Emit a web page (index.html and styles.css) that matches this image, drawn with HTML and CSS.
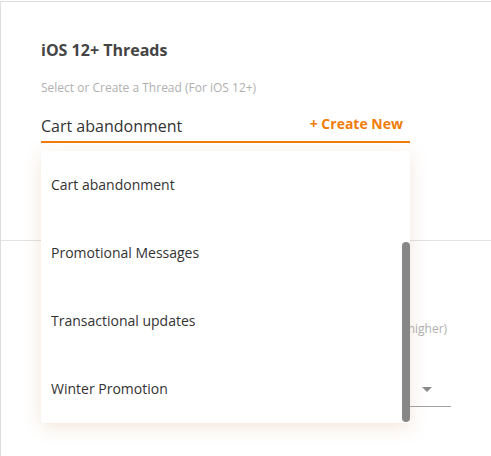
FILE: index.html
```html
<!DOCTYPE html>
<html>
<head>
<meta charset="utf-8">
<link rel="stylesheet" href="styles.css">
</head>
<body>
<div class="card">
  <section class="section first">
    <h2 class="title">iOS 12+ Threads</h2>
    <p class="hint">Select or Create a Thread (For iOS 12+)</p>
    <div class="field">
      <div class="input-row">
        <span class="value">Cart abandonment</span>
        <span class="create">+ Create New</span>
      </div>
      <div class="dropdown">
        <ul class="options">
          <li class="option">Cart abandonment</li>
          <li class="option">Promotional Messages</li>
          <li class="option">Transactional updates</li>
          <li class="option">Winter Promotion</li>
        </ul>
        <div class="thumb"></div>
      </div>
    </div>
  </section>
  <section class="section second">
    <p class="hint">Select a Category for this Notification (Supported on iOS 10.0 and higher)</p>
    <div class="select">
      <span class="arrow"></span>
    </div>
  </section>
</div>
</body>
</html>
```

FILE: styles.css
```css
html, body {
  margin: 0;
  padding: 0;
  background: #fff;
}
body {
  padding-top: 1px;
  font-family: "Open Sans", "DejaVu Sans", sans-serif;
  overflow: hidden;
}
.card {
  border-top: 1px solid #dedede;
  border-left: 1px solid #dedede;
  height: 460px;
}
.section {
  padding: 37px 0 0 40px;
  box-sizing: border-box;
}
.first {
  height: 239px;
  border-bottom: 1px solid #e2e2e2;
}
.title {
  margin: 0;
  font-size: 16px;
  line-height: 22px;
  font-weight: 700;
  color: #444;
}
.hint {
  margin: 19px 0 0;
  font-size: 12px;
  line-height: 16px;
  color: #b0b0b0;
  white-space: nowrap;
}
.field {
  position: relative;
  width: 369px;
  margin-top: 19px;
}
.input-row {
  display: flex;
  justify-content: space-between;
  align-items: flex-start;
  padding: 0 7px 4px 0;
  border-bottom: 2px solid #f07d0a;
}
.value {
  font-size: 16px;
  line-height: 22px;
  color: #333;
}
.create {
  font-size: 14px;
  line-height: 18px;
  font-weight: 700;
  color: #f07d0a;
}
.dropdown {
  position: absolute;
  z-index: 5;
  left: 0;
  top: 36px;
  width: 369px;
  height: 272px;
  background: #fff;
  border-radius: 3px;
  box-shadow: 0 4px 18px rgba(200, 140, 90, 0.22);
}
.options {
  list-style: none;
  margin: 0;
  padding: 0;
}
.option {
  height: 68px;
  line-height: 68px;
  padding-left: 10px;
  font-size: 14px;
  color: #333;
}
.thumb {
  position: absolute;
  right: 0;
  top: 91px;
  width: 8px;
  height: 180px;
  border-radius: 4px;
  background: #878787;
}
.second {
  padding-top: 61px;
}
.select {
  display: flex;
  justify-content: flex-end;
  align-items: center;
  width: 410px;
  margin-top: 36px;
  height: 34px;
  border-bottom: 1px solid #a0a0a0;
  box-sizing: border-box;
}
.arrow {
  width: 0;
  height: 0;
  margin-right: 19px;
  border-left: 5px solid transparent;
  border-right: 5px solid transparent;
  border-top: 5px solid #8a8a8a;
}
```
